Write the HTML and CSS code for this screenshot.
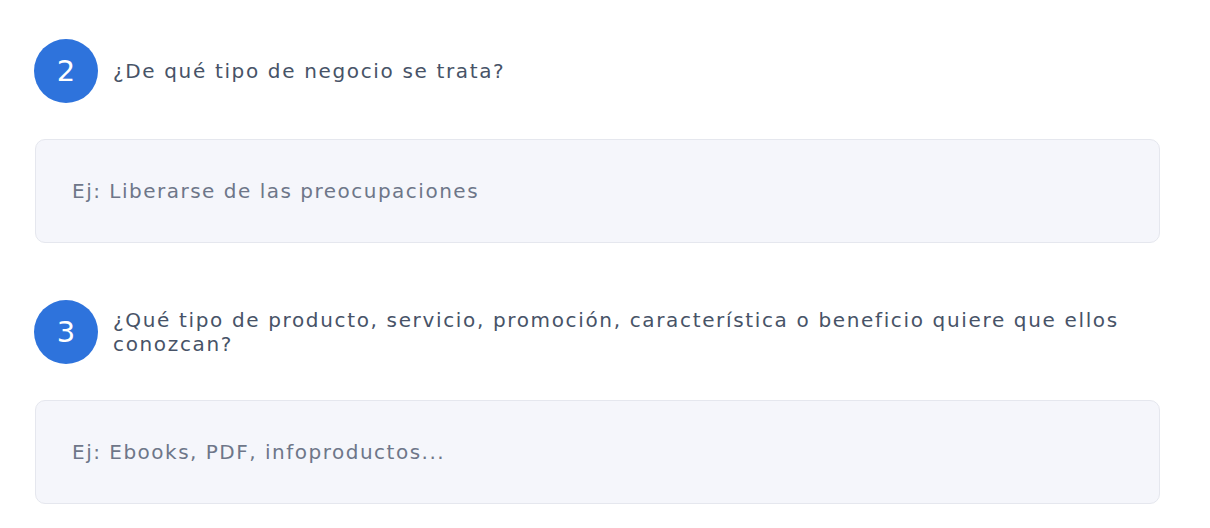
FILE: index.html
```html
<!DOCTYPE html>
<html lang="es">
  <head>
    <meta charset="UTF-8" />
    <meta name="viewport" content="width=device-width, initial-scale=1.0" />
    <title>Cuestionario</title>
    <link rel="stylesheet" href="styles.css">
  </head>
  <body>
    <div class="container">
      <div class="field">
        <div class="question">
          <span class="step">2</span>
          <label for="negocio">¿De qué tipo de negocio se trata?</label>
        </div>
        <input type="text" id="negocio" class="answer" placeholder="Ej: Liberarse de las preocupaciones" />
      </div>

      <div class="field">
        <div class="question">
          <span class="step">3</span>
          <label for="producto">¿Qué tipo de producto, servicio, promoción, característica o beneficio quiere que ellos conozcan?</label>
        </div>
        <input type="text" id="producto" class="answer" placeholder="Ej: Ebooks, PDF, infoproductos..." />
      </div>
    </div>
  </body>
</html>
```

FILE: styles.css
```css
body {
  font-family: "DejaVu Sans", sans-serif;
  background-color: #fff;
  margin: 0;
  padding: 0;
}

.container {
  width: 1125px;
  padding: 39px 0 0 34px;
}

.field {
  margin-bottom: 57px;
}

.question {
  display: flex;
  align-items: center;
  gap: 15px;
  margin-bottom: 36px;
}

.step {
  flex: none;
  width: 64px;
  height: 64px;
  border-radius: 50%;
  background-color: #2e73dc;
  color: #fff;
  font-size: 29px;
  display: flex;
  align-items: center;
  justify-content: center;
}

.question label {
  color: #475367;
  font-size: 20px;
  letter-spacing: 1.65px;
  line-height: 24px;
  padding-right: 20px;
}

.answer {
  box-sizing: border-box;
  display: block;
  width: 100%;
  height: 104px;
  margin-left: 1px;
  padding: 0 36px;
  background-color: #f5f6fb;
  border: 1px solid #e5e7ee;
  border-radius: 10px;
  font-family: "DejaVu Sans", sans-serif;
  font-size: 20px;
  color: #4a5468;
  outline: none;
}

.answer::placeholder {
  color: #6e7689;
  letter-spacing: 1.5px;
}
```
